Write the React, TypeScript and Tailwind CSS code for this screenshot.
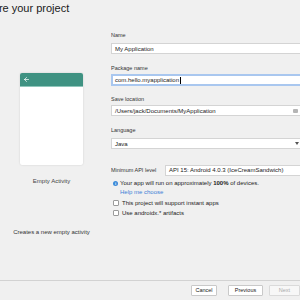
import { ArrowLeft } from 'lucide-react';

const font = { fontFamily: '"Liberation Sans", Arial, sans-serif' };

const Field = ({ value, focused, icon }: { value: string; focused?: boolean; icon?: 'folder' | 'caret' }) => (
  <div
    className={
      focused
        ? 'flex items-center h-[12px] w-[200px] bg-white border-2 border-[#a9c7ef] pl-[2px] text-[6px] text-[#222]'
        : 'flex items-center h-[11px] w-[200px] bg-white border border-[#d4d4d4] pl-[3px] text-[6px] text-[#222]'
    }>
    <span className="leading-none whitespace-nowrap">{value}</span>
    {focused && <span className="w-px h-[7px] bg-black ml-px" />}
    {icon === 'folder' && (
      <span className="ml-auto mr-[12px] w-[5px] h-[4px] bg-[#b5b5b5] rounded-[1px]" />
    )}
    {icon === 'caret' && (
      <span className="ml-auto mr-[11px] w-0 h-0 border-l-[2px] border-r-[2px] border-t-[3px] border-l-transparent border-r-transparent border-t-[#555]" />
    )}
  </div>
);

const Label = ({ children, className = '' }: { children: string; className?: string }) => (
  <div className={`text-[5.5px] leading-[8px] text-[#333] whitespace-nowrap ${className}`}>{children}</div>
);

const Checkbox = ({ label }: { label: string }) => (
  <div className="flex items-center gap-[3px] h-[10px] pl-[2px]">
    <span className="w-[6px] h-[6px] bg-white border border-[#9a9a9a] rounded-[1px]" />
    <span className="text-[6px] text-[#222] whitespace-nowrap">{label}</span>
  </div>
);

export default function App() {
  return (
    <div className="w-[300px] h-[300px] overflow-hidden bg-[#f0f0f0] flex flex-col" style={font}>
      <div className="h-[26px] pt-[1px] text-[11px] leading-[14px] text-[#1a1a1a] whitespace-nowrap -ml-[39px]">
        Configure your project
      </div>

      <div className="flex flex-1">
        <div className="w-[103px] flex flex-col items-center">
          <div className="mt-[47px] w-[63px] h-[92px] bg-white rounded-[2px] shadow-[0_0_2px_rgba(0,0,0,0.15)] flex flex-col overflow-hidden">
            <div className="h-[14px] bg-[#3f9282] flex items-center pl-[3px] border-b border-[#8fc6bb]">
              <ArrowLeft size={7} color="#ffffff" strokeWidth={2.5} />
            </div>
          </div>
          <div className="mt-[12px] text-[6px] leading-[8px] text-[#444]">Empty Activity</div>
          <div className="mt-[43px] text-[6px] leading-[8px] text-[#333] whitespace-nowrap">Creates a new empty activity</div>
        </div>

        <div className="ml-[8px] flex-1 flex flex-col overflow-hidden">
          <Label className="mt-[5px]">Name</Label>
          <div className="mt-[4px]">
            <Field value="My Application" />
          </div>
          <Label className="mt-[10px]">Package name</Label>
          <div className="mt-[2px]">
            <Field value="com.hello.myapplication" focused />
          </div>
          <Label className="mt-[9px]">Save location</Label>
          <div className="mt-[2px]">
            <Field value="/Users/jack/Documents/MyApplication" icon="folder" />
          </div>
          <Label className="mt-[10px]">Language</Label>
          <div className="mt-[4px]">
            <Field value="Java" icon="caret" />
          </div>
          <div className="mt-[16px] flex items-center">
            <span className="w-[54px] shrink-0 whitespace-nowrap text-[5.5px] text-[#333]">Minimum API level</span>
            <div className="flex items-center shrink-0 h-[11px] w-[200px] bg-white border border-[#d4d4d4] pl-[3px] text-[6px] text-[#222]">
              <span className="whitespace-nowrap">API 15: Android 4.0.3 (IceCreamSandwich)</span>
              <span className="ml-[27px] w-0 h-0 border-l-[2px] border-r-[2px] border-t-[3px] border-l-transparent border-r-transparent border-t-[#555]" />
            </div>
          </div>
          <div className="mt-[3px] flex items-center gap-[2px] h-[9px] pl-[2px]">
            <span className="w-[5px] h-[5px] rounded-full bg-[#3b8ad9] flex items-center justify-center text-white text-[4px] font-bold leading-none">
              i
            </span>
            <span className="text-[6px] text-[#222] whitespace-nowrap">
              Your app will run on approximately <b>100%</b> of devices.
            </span>
          </div>
          <div className="pl-[9px] h-[10px] leading-[9px] text-[6px] text-[#3d7fd6]">Help me choose</div>
          <Checkbox label="This project will support instant apps" />
          <Checkbox label="Use androidx.* artifacts" />
        </div>
      </div>

      <div className="h-[20px] border-t border-[#d2d2d2] flex items-start pt-[4px] pl-[191px] gap-[11px]">
        <button className="h-[11px] w-[26px] bg-white border border-[#c9c9c9] rounded-[1px] text-[5.5px] text-[#222]">
          Cancel
        </button>
        <div className="flex gap-[6px]">
          <button className="h-[11px] w-[35px] bg-white border border-[#c9c9c9] rounded-[1px] text-[5.5px] text-[#222]">
            Previous
          </button>
          <button className="h-[11px] w-[31px] shrink-0 bg-[#f7f7f7] border border-[#dadada] rounded-[1px] text-[5.5px] text-[#aaa]">
            Next
          </button>
        </div>
      </div>
    </div>
  );
}
